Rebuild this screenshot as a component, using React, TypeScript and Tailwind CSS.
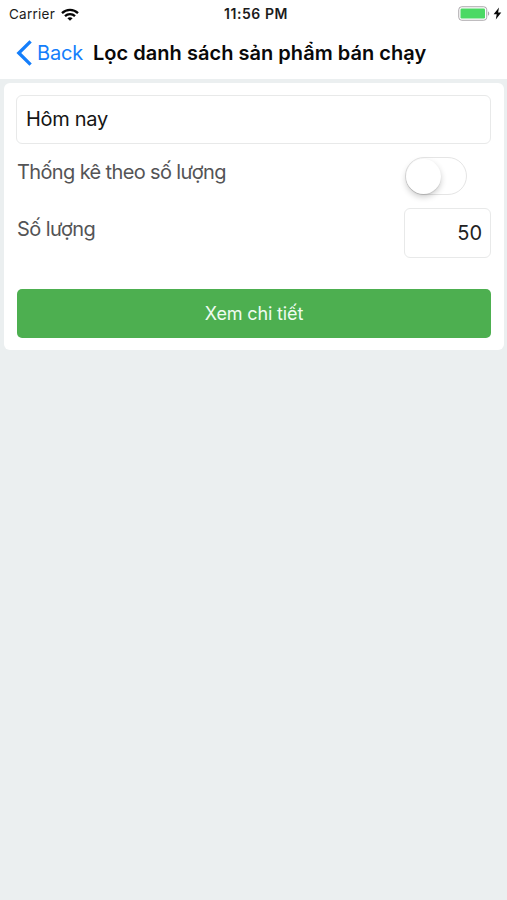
function StatusBar() {
  return (
    <div className="grid h-7 grid-cols-3 items-center pr-[5px] pl-[9px] text-[13.5px] leading-7 text-[#1c1c1c]">
      <div className="flex items-center gap-[6px]">
        <span className="tracking-[0.25px]">Carrier</span>
        <svg width="18" height="13" viewBox="0 0 18 13" fill="none" stroke="#050505" strokeWidth="2.3">
          <path d="M1 5.1C5.5 0.8 12.5 0.8 17 5.1" />
          <path d="M4 8.2C6.8 5.5 11.2 5.5 14 8.2" />
          <path d="M6.4 10.2C7.8 8.9 10.2 8.9 11.6 10.2L9 12.7Z" fill="#050505" stroke="none" />
        </svg>
      </div>
      <span className="pl-[1px] text-center text-[14px] font-semibold tracking-[0.55px] whitespace-nowrap">11:56 PM</span>
      <div className="flex items-center justify-end gap-[3px] pb-px">
        <svg width="32" height="15" viewBox="0 0 32 15">
          <rect x="0.75" y="0.75" width="28" height="13.5" rx="3" fill="#fff" stroke="#aaa6aa" strokeWidth="1" />
          <rect x="2.5" y="2.5" width="24.5" height="10" rx="1.2" fill="#4bd964" />
          <path d="M30 5.2C31.7 6 31.7 9 30 9.8Z" fill="#aaa6aa" />
        </svg>
        <svg width="9" height="13" viewBox="0 0 9 13">
          <path d="M6 0.5L0.6 7.2H3.7L2.8 12.5L8.3 5.6H5.1Z" fill="#080808" />
        </svg>
      </div>
    </div>
  );
}

function NavBar() {
  return (
    <div className="flex h-[51px] items-center pb-[2px] pl-4 text-[20px] leading-[30px] whitespace-nowrap">
      <button className="flex w-[77px] items-center gap-[5px] text-[#147efb]">
        <svg width="16" height="26" viewBox="0 0 16 26" fill="none" stroke="#147efb" strokeWidth="3.3">
          <path d="M14.6 1.3L2.8 13L14.6 24.7" />
        </svg>
        <span className="tracking-[-0.2px]">Back</span>
      </button>
      <h1 className="font-semibold tracking-[0.03px] text-[#090909]">Lọc danh sách sản phẩm bán chạy</h1>
    </div>
  );
}

export default function App() {
  return (
    <div className="h-[900px] w-[507px] overflow-hidden bg-[#ebeff0] font-['Inter','Liberation_Sans',sans-serif]">
      <header className="h-[79px] bg-white">
        <StatusBar />
        <NavBar />
      </header>
      <main className="pt-1 pr-[3px] pl-1">
        <section className="h-[267px] rounded-[6px] bg-white px-[13px] pt-3 text-[20px] text-[#545456]">
          <div className="-ml-px flex h-[49px] items-center rounded-[6px] border border-[#e8e9e9] px-[9px] pb-[2px] text-[#151515]">
            <span className="tracking-[-0.3px]">Hôm nay</span>
          </div>
          <div className="flex h-16 justify-between pr-6">
            <span className="pt-[13px] leading-[30px] tracking-[-0.63px]">Thống kê theo số lượng</span>
            <div role="switch" aria-checked="false" className="mt-[13px] flex h-[38px] w-[62px] items-center rounded-full border-[1.5px] border-[#e5e5e5]">
              <span className="h-[35px] w-[35px] rounded-full bg-white shadow-[0_3px_6px_rgba(0,0,0,0.2),0_1px_1px_rgba(0,0,0,0.1)]" />
            </div>
          </div>
          <div className="flex h-[50px] justify-between">
            <span className="pt-[6px] leading-[30px] tracking-[-0.6px]">Số lượng</span>
            <div className="flex h-[50px] w-[87px] items-center justify-end rounded-[6px] border border-[#e8e9e9] pr-2 text-[#222]">50</div>
          </div>
          <button className="mt-[31px] flex h-[49px] w-full items-center justify-center rounded-[5px] bg-[#4daf50] text-[18px] tracking-[-0.15px] text-[#effbf0]">
            Xem chi tiết
          </button>
        </section>
      </main>
    </div>
  );
}
